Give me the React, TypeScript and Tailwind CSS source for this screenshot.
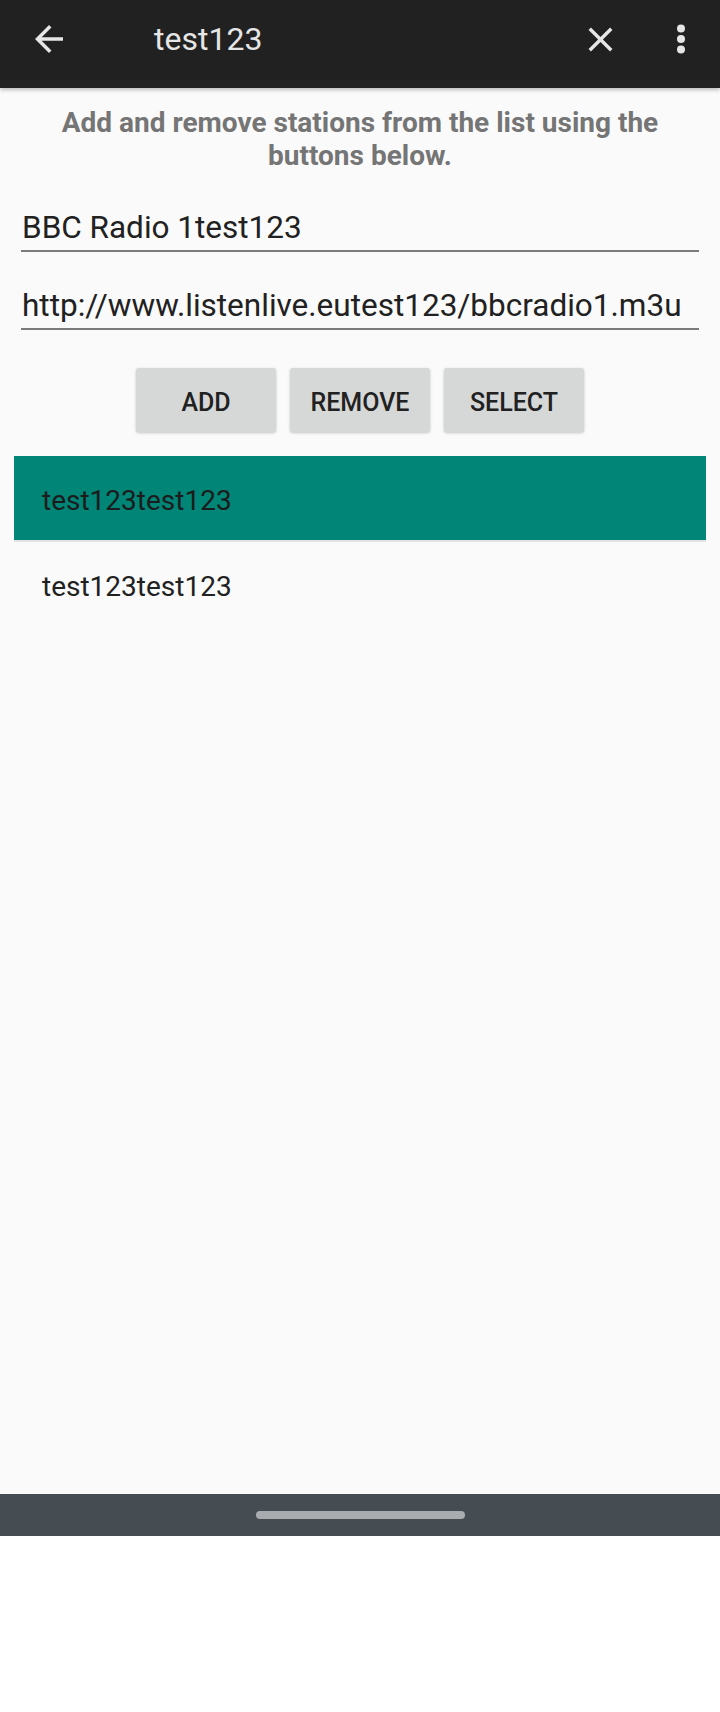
import React from 'react'

const stations = ['test123test123', 'test123test123']

function BackIcon() {
  return (
    <svg viewBox="0 0 24 24" className="h-[42px] w-[42px]" fill="#e6e6e6">
      <path d="M20 11H7.83l5.59-5.59L12 4l-8 8 8 8 1.41-1.41L7.83 13H20v-2z" />
    </svg>
  )
}

function CloseIcon() {
  return (
    <svg viewBox="0 0 24 24" className="h-[41px] w-[41px]" fill="#e6e6e6">
      <path d="M19 6.41L17.59 5 12 10.59 6.41 5 5 6.41 10.59 12 5 17.59 6.41 19 12 13.41 17.59 19 19 17.59 13.41 12z" />
    </svg>
  )
}

function MoreIcon() {
  return (
    <svg viewBox="0 0 24 42" className="h-[42px] w-[24px]" fill="#e6e6e6">
      <circle cx="12" cy="10.5" r="4" />
      <circle cx="12" cy="21" r="4" />
      <circle cx="12" cy="31.5" r="4" />
    </svg>
  )
}

function Field({ value }: { value: string }) {
  return (
    <div className="border-b-2 border-[#7b7b7b] pb-[4px] pl-[1px] text-[31.5px] leading-[36px] text-[#212121]">
      {value}
    </div>
  )
}

export default function App() {
  return (
    <div className="flex h-[1712px] w-[720px] flex-col bg-white font-['Roboto',sans-serif]">
      <header className="relative z-10 flex h-[88px] shrink-0 items-center bg-[#212121] pb-[10px] shadow-[0_2px_4px_rgba(0,0,0,0.25)]">
        <div className="ml-[28px] flex items-center">
          <BackIcon />
        </div>
        <h1 className="ml-[84px] flex-1 text-[32px] font-normal text-[#e6e6e6]">test123</h1>
        <div className="flex items-center">
          <CloseIcon />
        </div>
        <div className="ml-[48px] mr-[27px] flex items-center">
          <MoreIcon />
        </div>
      </header>

      <main className="flex h-[1406px] shrink-0 flex-col bg-[#fafafa]">
        <p className="mx-auto mt-[18px] w-[640px] text-center text-[28px] font-bold leading-[33px] text-[#757575]">
          Add and remove stations from the list using the buttons below.
        </p>

        <div className="mx-[21px] mt-[38px] flex flex-col gap-[36px]">
          <Field value="BBC Radio 1test123" />
          <Field value="http://www.listenlive.eutest123/bbcradio1.m3u" />
        </div>

        <div className="mt-[38px] flex justify-center gap-[14px]">
          {['ADD', 'REMOVE', 'SELECT'].map((label) => (
            <button
              key={label}
              type="button"
              className="h-[64px] w-[140px] rounded-[3px] bg-[#d6d7d7] pt-[5px] text-[25px] font-medium text-[#212121] shadow-[0_1px_3px_rgba(0,0,0,0.22)]"
            >
              {label}
            </button>
          ))}
        </div>

        <ul className="mx-[14px] mt-[24px] flex flex-col">
          {stations.map((name, i) => (
            <li key={i} className="flex flex-col">
              <div
                className={
                  i === 0
                    ? 'flex h-[84px] items-center bg-[#008577] pl-[28px] pt-[5px] text-[28px] text-[#1c1c1c]'
                    : 'flex h-[84px] items-center pl-[28px] pt-[5px] text-[28px] text-[#212121]'
                }
              >
                {name}
              </div>
              {i === 0 ? <div className="h-[2px] bg-[#e3e3e3]" /> : null}
            </li>
          ))}
        </ul>
      </main>

      <nav className="flex h-[42px] shrink-0 items-center justify-center bg-[#454d53]">
        <div className="h-[8px] w-[209px] rounded-full bg-[#a8acaf]" />
      </nav>
    </div>
  )
}
